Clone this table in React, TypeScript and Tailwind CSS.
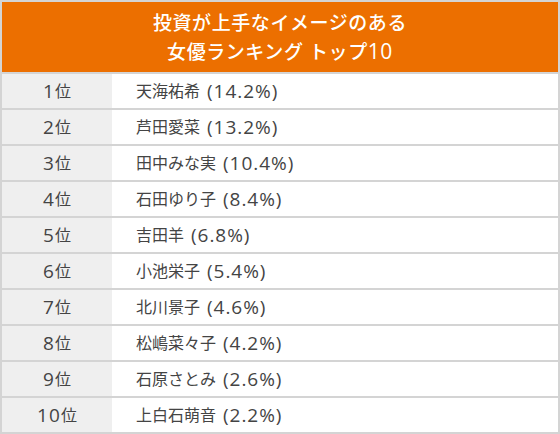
const rows = [
  ["1", "天海祐希", "14.2%"],
  ["2", "芦田愛菜", "13.2%"],
  ["3", "田中みな実", "10.4%"],
  ["4", "石田ゆり子", "8.4%"],
  ["5", "吉田羊", "6.8%"],
  ["6", "小池栄子", "5.4%"],
  ["7", "北川景子", "4.6%"],
  ["8", "松嶋菜々子", "4.2%"],
  ["9", "石原さとみ", "2.6%"],
  ["10", "上白石萌音", "2.2%"],
];

export default function App() {
  return (
    <div
      className="w-[560px] h-[434px] bg-[#d4d4d4] p-[2px] text-[#444]"
      style={{ fontFamily: '"Open Sans", "Noto Sans CJK JP", sans-serif' }}
    >
      <div className="h-[70px] bg-[#ec6f00] text-white flex flex-col items-center justify-center text-[19px] font-medium leading-[28px]">
        <div className="tracking-[0.03em]">投資が上手なイメージのある</div>
        <div className="tracking-[0.03em]">
          女優ランキング トップ<span className="text-[21px]">10</span>
        </div>
      </div>
      {rows.map(([rank, name, pct]) => (
        <div key={rank} className="mt-[2px] h-[34px] flex">
          <div className="w-[110px] bg-[#efefef] flex items-center justify-center text-[16px]">
            <span className="text-[19px] tracking-[0.06em]">{rank}</span>位
          </div>
          <div className="flex-1 bg-white flex items-center pl-[24px] text-[16px]">
            {name}
            <span className="ml-[7px] text-[19px] tracking-[0.05em]">({pct})</span>
          </div>
        </div>
      ))}
    </div>
  );
}
